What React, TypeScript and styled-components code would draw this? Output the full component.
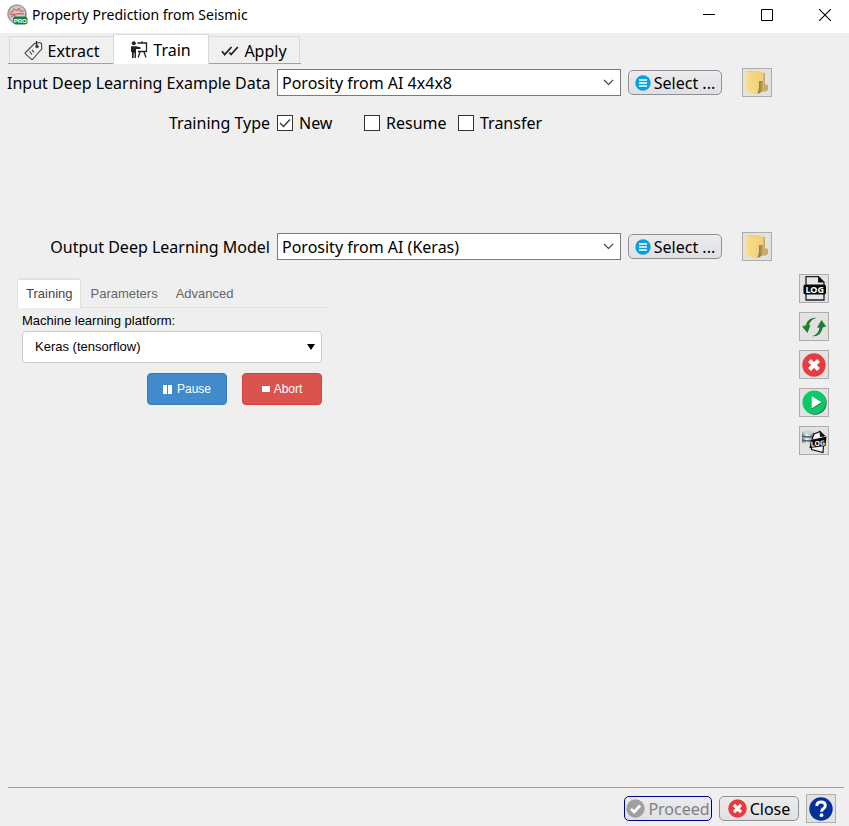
import React, { useState } from "react";
import styled, { createGlobalStyle, css } from "styled-components";

const GlobalStyle = createGlobalStyle`
  * { box-sizing: border-box; }
  body {
    margin: 0;
    background: #efefef;
    color: #000;
    font: 16px/22px "Noto Sans", "Open Sans", sans-serif;
  }
  button, select, input { font: inherit; color: inherit; margin: 0; }
`;

/* ---------- window ---------- */

const Window = styled.div`
  display: flex;
  flex-direction: column;
  min-height: 100vh;
`;

const TitleBar = styled.header`
  display: flex;
  align-items: center;
  height: 33px;
  padding: 0 10px 4px 7px;
  gap: 4px;
  background: #fff;
`;

const Title = styled.h1`
  flex: 1;
  margin: 0;
  font: 14px/20px "Noto Sans", "Open Sans", sans-serif;
`;

const WindowControls = styled.div`
  display: flex;
  gap: 30px;
`;

const WindowButton = styled.button`
  display: grid;
  place-items: center;
  width: 28px;
  height: 28px;
  padding: 0;
  border: 0;
  background: none;
`;

/* ---------- main tabs ---------- */

const TabBar = styled.nav`
  display: flex;
  align-items: flex-end;
  align-self: flex-start;
  height: 31px;
  margin-left: 8px;
  padding: 0 1px;
  border-bottom: 1px solid #a0a0a0;
`;

const Tab = styled.button<{ $active?: boolean; $width: number }>`
  display: flex;
  align-items: center;
  justify-content: center;
  gap: 5px;
  width: ${(p) => p.$width}px;
  height: 27px;
  padding: 2px 0 0;
  border: 1px solid #d9d9d9;
  border-bottom: 0;
  background: #f0f0f0;
  white-space: nowrap;
  ${(p) =>
    p.$active &&
    css`
      height: 30px;
      margin: 0 -1px -1px;
      padding: 0;
      background: #fff;
      z-index: 1;
    `}
`;

/* ---------- form ---------- */

const Form = styled.section`
  display: flex;
  flex-direction: column;
  padding: 4px 77px 0 7px;
`;

const Row = styled.div<{ $gapAbove?: number }>`
  display: grid;
  grid-template-columns: 263px minmax(0, 1fr) 94px 50px;
  align-items: center;
  min-height: 29px;
  margin-top: ${(p) => p.$gapAbove ?? 0}px;
`;

const RowLabel = styled.label`
  text-align: right;
  white-space: nowrap;
`;

const GroupLabel = styled.span`
  text-align: right;
`;

const Combo = styled.div`
  display: grid;
  grid-template-columns: 1fr 18px;
  align-items: center;
  margin: 0 7px;
`;

const ComboSelect = styled.select`
  grid-area: 1 / 1 / 2 / 3;
  width: 100%;
  height: 27px;
  padding: 0 20px 0 4px;
  border: 1px solid #7a7a7a;
  border-radius: 0;
  background: #fff;
  appearance: none;
`;

const ComboArrow = styled.svg`
  grid-area: 1 / 2;
  pointer-events: none;
`;

const PushButton = styled.button<{ $width: number; $default?: boolean }>`
  display: flex;
  align-items: center;
  justify-content: center;
  gap: 3px;
  width: ${(p) => p.$width}px;
  height: 25px;
  padding: 0;
  border: 1px solid #8f8f96;
  border-radius: 5px;
  background: linear-gradient(#ececef, #dfdfe5);
  white-space: nowrap;
  &:disabled {
    color: #808080;
  }
  ${(p) => p.$default && css`border-color: #000080;`}
`;

const IconButton = styled.button`
  display: grid;
  place-items: center;
  width: 30px;
  height: 29px;
  padding: 0;
  border: 1px solid #adadad;
  background: #e2e2e2;
`;

const FolderButton = styled(IconButton)`
  justify-self: end;
`;

const Choices = styled.div`
  display: grid;
  grid-template-columns: 87px 94px auto;
  grid-column: 2 / -1;
  justify-content: start;
  margin-left: 7px;
`;

const Choice = styled.label`
  display: grid;
  grid-template-columns: 16px auto;
  column-gap: 6px;
  align-items: center;
  justify-content: start;
`;

const Tick = styled.input`
  grid-area: 1 / 1;
  width: 16px;
  height: 16px;
  border: 1px solid #333;
  background: #fff;
  appearance: none;
  & + svg {
    grid-area: 1 / 1;
    visibility: hidden;
    pointer-events: none;
  }
  &:checked + svg {
    visibility: visible;
  }
`;

/* ---------- training panel ---------- */

const Body = styled.main`
  display: flex;
  flex: 1;
  justify-content: space-between;
  align-items: flex-start;
  padding: 13px 20px 20px 17px;
`;

const Panel = styled.section`
  flex: 0 1 311px;
  padding-top: 4px;
  font: 13px/16px "Liberation Sans", Arial, sans-serif;
`;

const PanelTabs = styled.nav`
  display: flex;
  border-bottom: 1px solid #e2e2e2;
`;

const PanelTab = styled.button<{ $active?: boolean }>`
  height: 30px;
  margin-bottom: -1px;
  padding: 1px 9px 0;
  border: 0;
  background: none;
  color: #666;
  ${(p) =>
    p.$active &&
    css`
      padding: 0 8px;
      border: 1px solid #e2e2e2;
      border-top-width: 2px;
      border-bottom: 0;
      border-radius: 3px 3px 0 0;
      background: #fff;
      color: #444;
    `}
`;

const PanelFields = styled.div`
  display: flex;
  flex-direction: column;
  gap: 2px;
  padding: 5px 6px 0 5px;
`;

const PlatformPicker = styled.div`
  display: grid;
  grid-template-columns: 1fr 15px;
  align-items: center;
`;

const PlatformSelect = styled.select`
  grid-area: 1 / 1 / 2 / 3;
  height: 32px;
  padding: 0 20px 0 12px;
  border: 1px solid #ccc;
  border-radius: 4px;
  background: #fff;
  appearance: none;
`;

const Actions = styled.div`
  display: flex;
  justify-content: flex-end;
  gap: 15px;
  padding-top: 8px;
  font-size: 12px;
`;

const ActionButton = styled.button<{ $color: string; $edge: string }>`
  display: flex;
  align-items: center;
  justify-content: center;
  gap: 4px;
  width: 80px;
  height: 32px;
  padding: 0;
  border: 1px solid ${(p) => p.$edge};
  border-radius: 4px;
  background: ${(p) => p.$color};
  color: #fff;
`;

const SideTools = styled.aside`
  display: flex;
  flex-direction: column;
  gap: 9px;
`;

const Footer = styled.footer`
  display: flex;
  align-items: center;
  justify-content: flex-end;
  margin: 0 5px 0 8px;
  padding: 6px 8px 3px 0;
  gap: 7px;
  border-top: 1px solid #a0a0a0;
`;

/* ---------- drawings ---------- */

const AppLogo = () => (
  <svg width="21" height="21" viewBox="0 0 21 21" aria-hidden="true">
    <defs>
      <linearGradient id="orb" x1="0" y1="0" x2="1" y2="1">
        <stop offset="0" stopColor="#8c8c8c" />
        <stop offset=".5" stopColor="#a9a7a7" />
        <stop offset="1" stopColor="#666" />
      </linearGradient>
    </defs>
    <circle cx="10" cy="10" r="9.8" fill="url(#orb)" />
    <circle cx="10" cy="10" r="8.2" fill="#cfcaca" />
    <path d="M3 8.5 6 7l1-2 3 1.5 2-2 1.5 2.5 3 .5M2.5 10.5c3-1.500 5 .8 8-.6 2-.8 4-.4 6.500.2M4 12.500l3-1 2 1" fill="none" stroke="#df5f62" strokeWidth="1.3" />
    <rect x="6" y="12.5" width="14.5" height="8" rx="3" fill="#16803a" />
    <text x="13.2" y="19" textAnchor="middle" fontFamily="Liberation Sans, sans-serif" fontWeight="700" fontSize="6" fill="#fff">PRO</text>
  </svg>
);

const TagIcon = () => (
  <svg width="19" height="20" viewBox="0 0 19 20" fill="none" stroke="#444" strokeWidth="1.1" aria-hidden="true">
    <path d="M1.500 11.500 10.500 2.500l5.500-1 1.500 1 .3 5.300-8.800 10.200q-.9.900-1.800.1l-5.700-5.200q-.8-.7 0-1.400z" />
    <path d="M12.500 0v4.500" stroke="#222" strokeWidth="1.3" />
    <circle cx="13" cy="5.500" r="1.200" fill="#222" />
    <path d="m5.500 10.500 2.500 3.200M8 8.800l2 2.600" />
  </svg>
);

const TrainIcon = () => (
  <svg width="17" height="17" viewBox="0 0 17 17" fill="none" stroke="#222" strokeWidth="1.3" aria-hidden="true">
    <circle cx="2.800" cy="2.300" r="2" fill="#222" stroke="none" />
    <path d="M0 5.300h5l4.500 1V8H5v9H3.600v-5h-.9v5H1V11H0z" fill="#222" stroke="none" />
    <path d="M6.500 2h9v8.500H7M9 11l-1.800 5.500M13 11l2 5.500M11 .3V2" />
  </svg>
);

const ApplyIcon = () => (
  <svg width="18" height="12" viewBox="0 0 18 12" fill="none" stroke="#222" aria-hidden="true">
    <path d="m1 6.200 2.700 3.300L10.500 2" strokeWidth="1.800" />
    <path d="m8.300 7.500 1.800 2L16.800 2" strokeWidth="1.800" />
  </svg>
);

const ListIcon = () => (
  <svg width="16" height="16" viewBox="0 0 16 16" aria-hidden="true">
    <circle cx="8" cy="8" r="7.700" fill="#0aa0dc" />
    <path d="M4 5h8M4 8h8M4 11h8" stroke="#fff" strokeWidth="1.500" />
  </svg>
);

const FolderIcon = () => (
  <svg width="24" height="26" viewBox="0 0 24 26" aria-hidden="true">
    <defs>
      <linearGradient id="leaf" x1="0" x2="1">
        <stop offset="0" stopColor="#fbdf8e" />
        <stop offset="1" stopColor="#efd07c" />
      </linearGradient>
      <linearGradient id="inner" x1="0" x2="1">
        <stop offset="0" stopColor="#6f5b33" />
        <stop offset="1" stopColor="#c5a765" />
      </linearGradient>
    </defs>
    <path d="M1 1h12l5.500 1.500V21L12 24z" fill="#f0d17f" />
    <path d="M11 11h7v10l-5 3z" fill="url(#inner)" />
    <path d="M18.300 3v19l3.500-1q1.200-.5 1.200-2v-3q0-1.500-1.500-1.500H20V3z" fill="#c9a968" />
    <path d="m1 1.500 11 3q2 .6 2 2.500v11l-1.500 7L1 21.500z" fill="url(#leaf)" />
  </svg>
);

const LogIcon = () => (
  <svg width="25" height="27" viewBox="0 0 25 27" aria-hidden="true">
    <path d="M4 10V1.700h12.500l5.500 5.500V10M4 18v7h18v-7" fill="#e6e6e6" stroke="#222" strokeWidth="1.300" />
    <path d="M16 1v6.500h6.500z" fill="#111" />
    <rect x="1.500" y="9.500" width="22.500" height="10" rx="2" fill="#050505" />
    <text x="12.700" y="17.800" textAnchor="middle" fontFamily="Noto Sans, sans-serif" fontWeight="700" fontSize="9" fill="#fff">LOG</text>
  </svg>
);

const DataLogIcon = () => (
  <svg width="26" height="26" viewBox="0 0 26 26" aria-hidden="true">
    <defs>
      <linearGradient id="drum" x1="0" x2="1">
        <stop offset="0" stopColor="#7b848b" />
        <stop offset=".4" stopColor="#eef2f4" />
        <stop offset="1" stopColor="#76828b" />
      </linearGradient>
    </defs>
    <path d="M1 4q6-3 12 0v10.500q-6 2.500-12 0z" fill="url(#drum)" />
    <path d="M1 8q6 2 12 0M1 12q6 2 12 0" fill="none" stroke="#4f5d68" strokeWidth="1.500" />
    <ellipse cx="7" cy="4" rx="6" ry="1.600" fill="#cbd2d6" />
    <path d="M11 11 13 6l6-2.500 3.500 5.500M10.500 18v3.500l11.500 3 .5-7" fill="#f4f4f4" stroke="#111" strokeWidth="1.200" />
    <path d="m18.500 2.500.5 6.500 5.500-1z" fill="#111" />
    <path d="m10 12 15.500-3.500-1 9.500-16 2z" fill="#050505" />
    <text x="16.700" y="18" textAnchor="middle" transform="rotate(-6 16 14)" fontFamily="Noto Sans, sans-serif" fontWeight="700" fontSize="7" fill="#fff">LOG</text>
  </svg>
);

const RefreshIcon = () => (
  <svg width="26" height="22" viewBox="0 0 26 22" aria-hidden="true">
    <path d="M16 1.800Q7 .8 4.800 9.500L1 10.500l5.500 6.500L9.500 9 8 9.500Q9.500 3 16 1.800z" fill="#1f7c38" />
    <path d="M11 20.200q9 1 10.700-8.700l3.300-1L20.500 4 16 11.500l2.500.3Q17.500 18.500 11 20.200z" fill="#1f7c38" />
    <path d="M1 10.500l3.800-1q1-4 3-5.500M20.500 4l4.500 6.500" fill="none" stroke="#62b84e" strokeWidth="1" />
  </svg>
);

const CancelIcon = ({ size }: { size: number }) => (
  <svg width={size} height={size} viewBox="0 0 24 24" aria-hidden="true">
    <circle cx="12" cy="12" r="11.700" fill="#e73c3e" />
    <path d="m7.500 7.500 9 9m0-9-9 9" stroke="#fff" strokeWidth="4" />
  </svg>
);

const RunIcon = () => (
  <svg width="25" height="25" viewBox="0 0 25 25" aria-hidden="true">
    <circle cx="13" cy="13" r="11.700" fill="#35634b" />
    <circle cx="12.200" cy="12.200" r="11.700" fill="#08ca67" />
    <path d="M9 6v13.500l11-6.500z" fill="#35634b" />
    <path d="M9.500 6v12.500l10-6.200z" fill="#fff" />
  </svg>
);

const ProceedIcon = () => (
  <svg width="19" height="19" viewBox="0 0 19 19" aria-hidden="true">
    <circle cx="9.500" cy="9.500" r="9.200" fill="#a0a0a0" />
    <path d="m5 9.800 3.200 3.200 6-6.500" fill="none" stroke="#fff" strokeWidth="2.600" />
  </svg>
);

const HelpIcon = () => (
  <svg width="24" height="24" viewBox="0 0 24 24" aria-hidden="true">
    <circle cx="12" cy="12" r="11.700" fill="#043199" />
    <path d="M7.800 9q0-4 4.300-4 4.200 0 4.200 3.400 0 2-2 3.300-1.700 1.100-1.700 3" fill="none" stroke="#fff" strokeWidth="2.900" />
    <circle cx="12.500" cy="18.200" r="1.900" fill="#fff" />
  </svg>
);

/* ---------- pieces ---------- */

interface ModelRowProps {
  id: string;
  label: string;
  value: string;
  gapAbove?: number;
}

function ModelRow({ id, label, value, gapAbove }: ModelRowProps) {
  return (
    <Row $gapAbove={gapAbove}>
      <RowLabel htmlFor={id}>{label}</RowLabel>
      <Combo>
        <ComboSelect id={id}>
          <option>{value}</option>
        </ComboSelect>
        <ComboArrow width="11" height="7" viewBox="0 0 11 7" aria-hidden="true">
          <path d="m1 1 4.500 4.500L10 1" fill="none" stroke="#444" strokeWidth="1.100" />
        </ComboArrow>
      </Combo>
      <PushButton $width={94}>
        <ListIcon />
        Select ...
      </PushButton>
      <FolderButton aria-label="Open folder">
        <FolderIcon />
      </FolderButton>
    </Row>
  );
}

const trainingTypes = ["New", "Resume", "Transfer"];

export default function App() {
  const [trainingType, setTrainingType] = useState("New");

  return (
    <>
      <GlobalStyle />
      <Window>
        <TitleBar>
          <AppLogo />
          <Title>Property Prediction from Seismic</Title>
          <WindowControls>
            <WindowButton aria-label="Minimize">
              <svg width="12" height="12" viewBox="0 0 12 12"><path d="M0 5.500h12" stroke="#000" /></svg>
            </WindowButton>
            <WindowButton aria-label="Maximize">
              <svg width="12" height="12" viewBox="0 0 12 12"><path d="M.5.5h11v11H.5z" fill="none" stroke="#000" /></svg>
            </WindowButton>
            <WindowButton aria-label="Close window">
              <svg width="12" height="12" viewBox="0 0 12 12"><path d="m0 0 12 12M12 0 0 12" stroke="#000" strokeWidth="1.100" /></svg>
            </WindowButton>
          </WindowControls>
        </TitleBar>

        <TabBar>
          <Tab $width={105}><TagIcon />Extract</Tab>
          <Tab $width={96} $active><TrainIcon />Train</Tab>
          <Tab $width={92}><ApplyIcon />Apply</Tab>
        </TabBar>

        <Form>
          <ModelRow id="input-data" label="Input Deep Learning Example Data" value="Porosity from AI 4x4x8" />
          <Row $gapAbove={11}>
            <GroupLabel id="training-type">Training Type</GroupLabel>
            <Choices role="group" aria-labelledby="training-type">
              {trainingTypes.map((type) => (
                <Choice key={type}>
                  <Tick type="checkbox" checked={trainingType === type} onChange={() => setTrainingType(type)} />
                  <svg width="16" height="16" viewBox="0 0 16 16" aria-hidden="true">
                    <path d="m3 8 3.500 3.500 6.500-7" fill="none" stroke="#333" strokeWidth="1.300" />
                  </svg>
                  {type}
                </Choice>
              ))}
            </Choices>
          </Row>
          <ModelRow id="output-model" label="Output Deep Learning Model" value="Porosity from AI (Keras)" gapAbove={95} />
        </Form>

        <Body>
          <Panel>
            <PanelTabs>
              <PanelTab $active>Training</PanelTab>
              <PanelTab>Parameters</PanelTab>
              <PanelTab>Advanced</PanelTab>
            </PanelTabs>
            <PanelFields>
              <label htmlFor="platform">Machine learning platform:</label>
              <PlatformPicker>
                <PlatformSelect id="platform">
                  <option>Keras (tensorflow)</option>
                </PlatformSelect>
                <ComboArrow width="8" height="6" viewBox="0 0 8 6" aria-hidden="true">
                  <path d="M0 0h8L4 6z" />
                </ComboArrow>
              </PlatformPicker>
              <Actions>
                <ActionButton $color="#428bca" $edge="#357ebd">
                  <svg width="10" height="9" viewBox="0 0 10 9" aria-hidden="true"><path d="M0 0h4v9H0zM5 0h4v9H5z" fill="#fff" /></svg>
                  Pause
                </ActionButton>
                <ActionButton $color="#d9534f" $edge="#d43f3a">
                  <svg width="8" height="6" viewBox="0 0 8 6" aria-hidden="true"><path d="M0 0h8v6H0z" fill="#fff" /></svg>
                  Abort
                </ActionButton>
              </Actions>
            </PanelFields>
          </Panel>

          <SideTools>
            <IconButton aria-label="Show log"><LogIcon /></IconButton>
            <IconButton aria-label="Refresh"><RefreshIcon /></IconButton>
            <IconButton aria-label="Cancel run"><CancelIcon size={24} /></IconButton>
            <IconButton aria-label="Run"><RunIcon /></IconButton>
            <IconButton aria-label="Show data log"><DataLogIcon /></IconButton>
          </SideTools>
        </Body>

        <Footer>
          <PushButton $width={88} $default disabled><ProceedIcon />Proceed</PushButton>
          <PushButton $width={80}><CancelIcon size={19} />Close</PushButton>
          <IconButton aria-label="Help"><HelpIcon /></IconButton>
        </Footer>
      </Window>
    </>
  );
}
